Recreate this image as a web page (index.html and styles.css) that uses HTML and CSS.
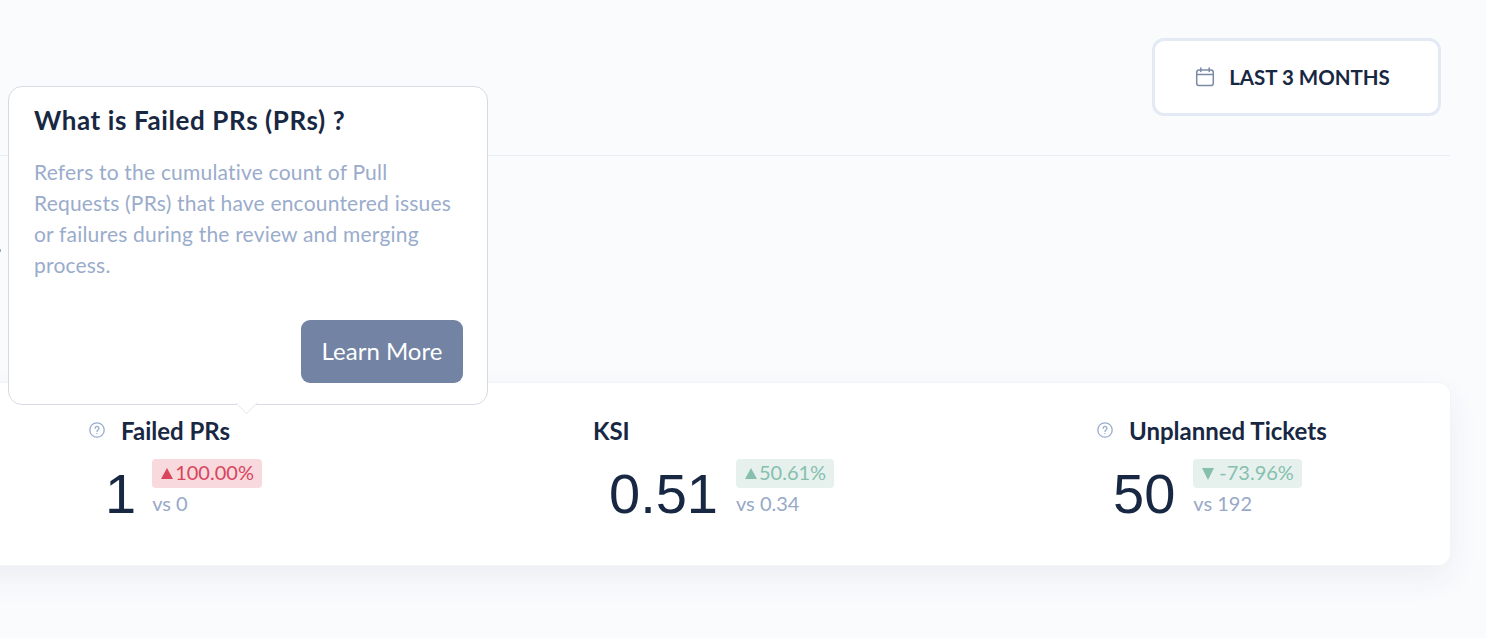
FILE: index.html
```html
<!DOCTYPE html>
<html lang="en">
<head>
<meta charset="utf-8">
<title>Metrics</title>
<link rel="stylesheet" href="styles.css">
</head>
<body>
<main class="page">
  <header class="header">
    <button class="range">
      <svg class="cal" viewBox="0 0 20 20" width="20" height="20" fill="none" stroke="#7a8aa8" stroke-width="1.5" stroke-linecap="round" stroke-linejoin="round"><rect x="1.7" y="3" width="16.6" height="15.6" rx="2.4"/><path d="M1.7 7.6h16.6M5.8 1v3.6M14.2 1v3.6"/></svg>
      <span>LAST 3 MONTHS</span>
    </button>
  </header>
  <section class="card">
    <div class="metric">
      <div class="title"><svg class="help" viewBox="0 0 16 16" width="16" height="16" fill="none" stroke="#9aaccb" stroke-width="1.3" stroke-linecap="round"><circle cx="8" cy="8" r="7.2"/><path d="M6.2 6.3a1.9 1.9 0 1 1 2.9 1.6c-.7.4-1.1.8-1.1 1.5"/><path d="M8 11.5v.1"/></svg><span>Failed PRs</span></div>
      <div class="values">
        <div class="number number-narrow">1</div>
        <div class="delta"><div class="badge bad"><i class="tri"></i>100.00%</div><div class="vs">vs 0</div></div>
      </div>
    </div>
    <div class="metric">
      <div class="title"><span>KSI</span></div>
      <div class="values">
        <div class="number">0.51</div>
        <div class="delta"><div class="badge good"><i class="tri"></i>50.61%</div><div class="vs">vs 0.34</div></div>
      </div>
    </div>
    <div class="metric">
      <div class="title"><svg class="help" viewBox="0 0 16 16" width="16" height="16" fill="none" stroke="#9aaccb" stroke-width="1.3" stroke-linecap="round"><circle cx="8" cy="8" r="7.2"/><path d="M6.2 6.3a1.9 1.9 0 1 1 2.9 1.6c-.7.4-1.1.8-1.1 1.5"/><path d="M8 11.5v.1"/></svg><span>Unplanned Tickets</span></div>
      <div class="values">
        <div class="number">50</div>
        <div class="delta"><div class="badge good"><i class="tri down"></i>-73.96%</div><div class="vs">vs 192</div></div>
      </div>
    </div>
  </section>
</main>
<i class="speck"></i>
<aside class="tooltip">
  <h2>What is Failed PRs (PRs) ?</h2>
  <p>Refers to the cumulative count of Pull Requests (PRs) that have encountered issues or failures during the review and merging process.</p>
  <div class="actions"><button class="learn">Learn More</button></div>
  <i class="arrow"></i>
</aside>
</body>
</html>
```
FILE: styles.css
```css
* { box-sizing: border-box; }
html, body { margin: 0; height: 100%; }
body {
  background: #fafbfd;
  font-family: "Lato", "Noto Sans", sans-serif;
  color: #182742;
  overflow: hidden;
  position: relative;
}
.page { padding-right: 36px; }
.header {
  height: 156px;
  padding: 38px 9px 0 0;
  display: flex;
  justify-content: flex-end;
  align-items: flex-start;
  border-bottom: 1px solid #e9ecf3;
}
.range {
  width: 289px;
  height: 78px;
  padding: 0 8px 0 0;
  background: #fff;
  border: 3px solid #e4eaf5;
  border-radius: 12px;
  display: flex;
  align-items: center;
  justify-content: center;
  gap: 14px;
  font: 700 20.5px "Lato", sans-serif;
  color: #182742;
}
.card {
  margin: 227px 0 0 -62px;
  height: 182px;
  background: #fff;
  border-radius: 12px;
  box-shadow: 0 0 0 1px #f3f4f8, 0 12px 32px rgba(40, 60, 110, .07);
  display: grid;
  grid-template-columns: repeat(3, 504px);
}
.metric { padding: 32px 0 0 151px; }
.title {
  display: flex;
  align-items: center;
  gap: 16px;
  height: 30px;
  font-size: 24px;
  font-weight: 700;
}
.values { display: flex; align-items: flex-start; gap: 18px; padding: 14px 0 0 16px; }
.number {
  margin-top: 3px;
  font: 400 56px/64px "Liberation Sans", sans-serif;
  color: #182742;
}
.number-narrow { margin-right: -2px; }
.badge {
  height: 29px;
  display: flex;
  align-items: center;
  padding: 0 8px 3px 9px;
  border-radius: 4px;
  font-size: 20px;
  white-space: nowrap;
}
.bad { background: #f7d9de; color: #d9455c; }
.good { background: #e6f1ee; color: #86bfae; }
.tri {
  width: 0; height: 0;
  margin: 3px 2px 0 0;
  border-left: 6.5px solid transparent;
  border-right: 6.5px solid transparent;
  border-bottom: 11px solid currentColor;
}
.tri.down { margin-right: 5px; border-bottom: 0; border-top: 12px solid currentColor; }
.vs { margin-top: 2px; font-size: 20px; line-height: 26px; color: #97a9c8; }
.tooltip {
  position: absolute;
  left: 8px; top: 86px;
  width: 480px; height: 319px;
  background: #fff;
  border: 1px solid #d8dbe1;
  border-radius: 14px;
  padding: 16px 25px 21px;
}
.tooltip h2 { margin: 0; font-size: 26px; line-height: 34px; font-weight: 700; letter-spacing: .6px; color: #182742; }
.tooltip p { margin: 19px 0 0; font-size: 21px; line-height: 31px; letter-spacing: .2px; color: #9aaccb; }
.actions { position: absolute; right: 24px; bottom: 21px; }
.learn {
  width: 162px; height: 63px;
  padding: 0 0 2px;
  border: 0;
  border-radius: 9px;
  background: #7283a3;
  color: #fff;
  font: 400 24px "Lato", sans-serif;
}
.arrow {
  position: absolute;
  left: 229px; bottom: -7px;
  width: 17px; height: 17px;
  background: #fff;
  border-right: 1px solid #e6e8ee;
  border-bottom: 1px solid #e6e8ee;
  transform: rotate(45deg);
  clip-path: polygon(100% 0, 100% 100%, 0 100%);
}
.speck { position: absolute; left: 0; top: 249px; width: 1px; height: 3px; background: #a4adbd; }
```
